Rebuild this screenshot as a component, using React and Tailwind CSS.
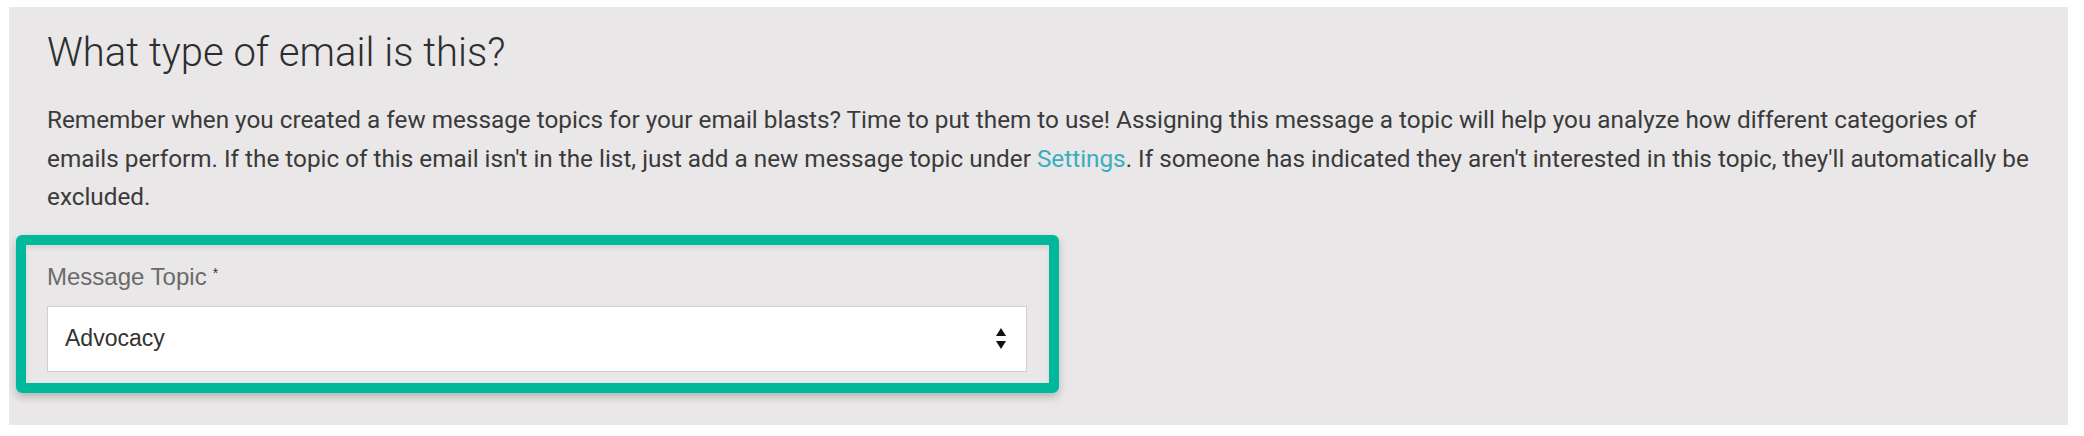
import React from "react";

function SortArrows() {
  return (
    <svg width="10" height="21" viewBox="0 0 10 21" aria-hidden="true">
      <path d="M5 0 L10 8 L0 8 Z" fill="#111" />
      <path d="M0 13 L10 13 L5 21 Z" fill="#111" />
    </svg>
  );
}

export default function App() {
  return (
    <div className="min-h-screen bg-white pl-[9px] pt-[7px]">
      <section className="h-[418px] w-[2059px] bg-[#e9e7e8] pl-[38px] pr-[32px] pt-[22px] font-['Roboto',sans-serif] text-[#333]">
        <h1 className="text-[40px] font-light leading-[48px] text-[#2e2e2e]">
          What type of email is this?
        </h1>

        <p className="mt-[24px] text-[24.3px] leading-[38.5px] text-[#3a3a3a]">
          Remember when you created a few message topics for your email blasts? Time to put them to use!
          Assigning this message a topic will help you analyze how different categories of emails perform.
          If the topic of this email isn't in the list, just add a new message topic under{" "}
          <a href="#" className="text-[#3aaebd]">
            Settings
          </a>
          . If someone has indicated they aren't interested in this topic, they'll automatically be excluded.
        </p>

        <div className="-ml-[31px] mt-[18px] w-[1043px] rounded-[6px] border-[10px] border-[#00b89b] pb-[11px] pl-[21px] pr-[22px] pt-[18px] shadow-[0_4px_8px_rgba(0,0,0,0.22),inset_0_3px_4px_rgba(0,0,0,0.08)] font-['Liberation_Sans',Arial,sans-serif]">
          <label className="block text-[24px] leading-[28px] text-[#6a6a6a]">
            Message Topic
            <sup className="ml-[6px] text-[14px] text-[#333]">*</sup>
          </label>

          <div className="mt-[15px] flex h-[66px] items-center justify-between border border-[#cfcfcf] bg-white pl-[17px] pr-[20px]">
            <span className="text-[23px] text-[#333]">Advocacy</span>
            <SortArrows />
          </div>
        </div>
      </section>
    </div>
  );
}
